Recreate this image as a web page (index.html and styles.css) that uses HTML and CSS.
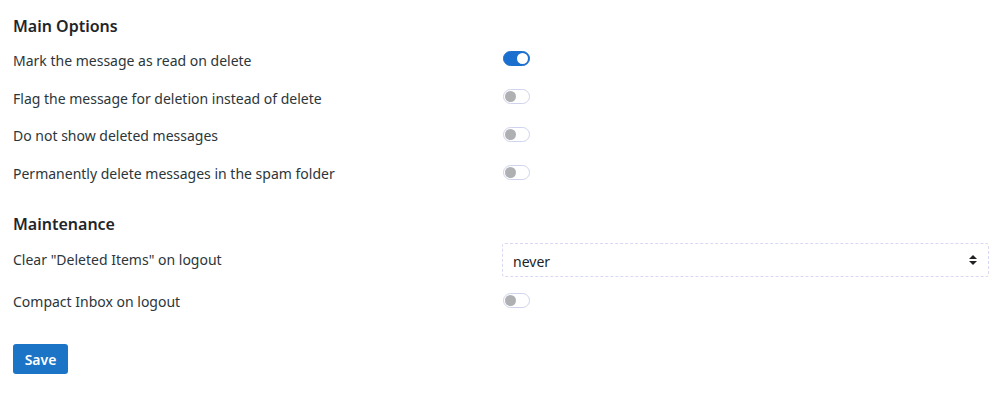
FILE: index.html
```html
<!DOCTYPE html>
<html>
<head>
<meta charset="utf-8">
<link rel="stylesheet" href="styles.css">
</head>
<body>
<form class="page">
  <section class="group">
    <h2 class="group-title">Main Options</h2>
    <div class="row"><span class="label">Mark the message as read on delete</span><span class="ctl"><span class="toggle on"></span></span></div>
    <div class="row"><span class="label">Flag the message for deletion instead of delete</span><span class="ctl"><span class="toggle"></span></span></div>
    <div class="row"><span class="label">Do not show deleted messages</span><span class="ctl"><span class="toggle"></span></span></div>
    <div class="row"><span class="label">Permanently delete messages in the spam folder</span><span class="ctl"><span class="toggle"></span></span></div>
  </section>
  <section class="group group-2">
    <h2 class="group-title">Maintenance</h2>
    <div class="row row-select"><span class="label">Clear "Deleted Items" on logout</span><span class="ctl"><span class="select"><span class="select-value">never</span><svg class="select-arrows" width="8" height="10" viewBox="0 0 8 10"><path d="M4 0 L8 4 L0 4 Z M0 6 L8 6 L4 10 Z" fill="#222"/></svg></span></span></div>
    <div class="row row-after"><span class="label">Compact Inbox on logout</span><span class="ctl"><span class="toggle"></span></span></div>
  </section>
  <div class="actions"><button type="button" class="btn-save">Save</button></div>
</form>
</body>
</html>
```
FILE: styles.css
```css
html, body {
  margin: 0;
  padding: 0;
  background: #fff;
}
body {
  font-family: "Noto Sans", "Open Sans", sans-serif;
  font-size: 14px;
  color: #2c363a;
}
.page {
  padding: 0 13px;
}
.group-title {
  margin: 14px 0 4px;
  height: 24px;
  line-height: 24px;
  font-size: 16px;
  font-weight: 600;
  color: #1f2629;
}
.group-2 .group-title {
  margin-top: 19px;
  margin-bottom: 4px;
}
.row {
  display: grid;
  grid-template-columns: 489px 1fr;
  align-items: center;
  height: 37.8px;
}
.row-select {
  height: 40px;
}
.row-after {
  height: 44px;
}
.label {
  line-height: 20px;
}
.ctl {
  display: flex;
  align-items: center;
}
.toggle {
  position: relative;
  box-sizing: border-box;
  width: 27px;
  height: 15px;
  border-radius: 8px;
  border: 1px solid #cfd3ee;
  background: #fff;
  margin: 0 0 4px 1px;
}
.toggle::after {
  content: "";
  position: absolute;
  left: 1px;
  top: 1px;
  width: 11px;
  height: 11px;
  border-radius: 50%;
  background: #aeb0b2;
}
.toggle.on {
  background: #1a6fcf;
  border-color: #1a6fcf;
}
.toggle.on::after {
  left: auto;
  right: 1px;
  background: #fff;
}
.select {
  box-sizing: border-box;
  flex: 1;
  height: 34px;
  display: flex;
  align-items: center;
  justify-content: space-between;
  padding: 0 11px 0 10px;
  border: 1px dashed #d9d9f5;
  border-radius: 3px;
  color: #1c2326;
}
.select-value {
  padding-top: 2px;
}
.actions {
  margin-top: 20px;
}
.btn-save {
  box-sizing: border-box;
  width: 55px;
  height: 30px;
  border: 0;
  border-radius: 3px;
  background: #1b74c6;
  color: #fff;
  font-family: "Noto Sans", "Open Sans", sans-serif;
  font-size: 14px;
  font-weight: 600;
  padding: 0;
}
```
